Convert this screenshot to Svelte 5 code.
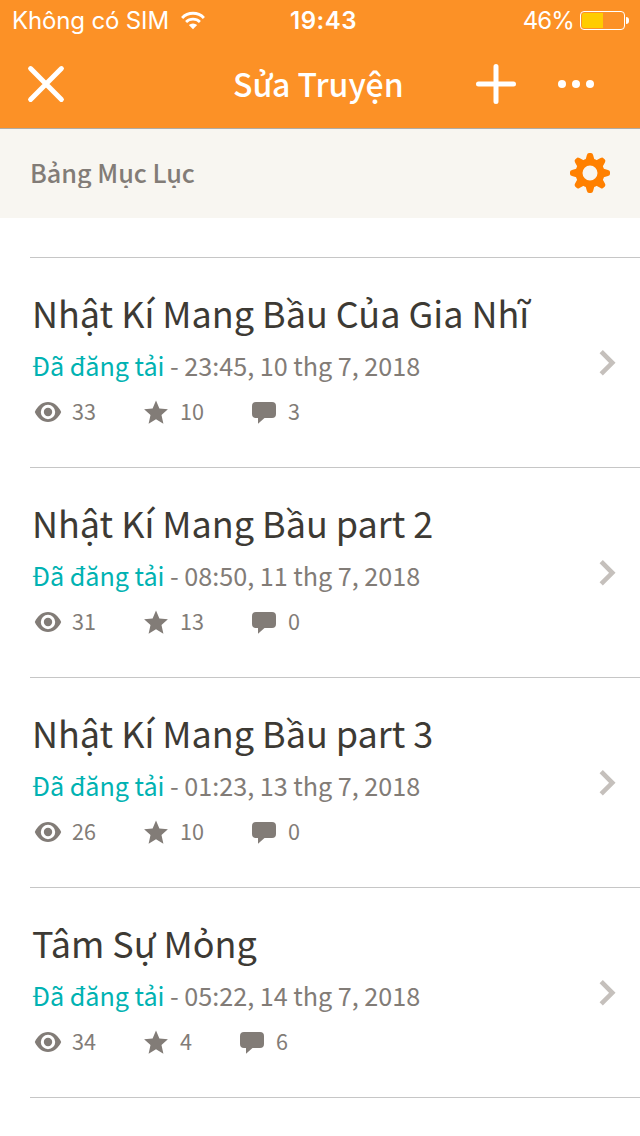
<script lang="ts">
  type Part = {
    id: number;
    title: string;
    date: string;
    reads: number;
    votes: number;
    comments: number;
  };

  export let status = 'Đã đăng tải';
  export let battery = 46;
  export let parts: Part[] = [
    { id: 1, title: 'Nhật Kí Mang Bầu Của Gia Nhĩ', date: '23:45, 10 thg 7, 2018', reads: 33, votes: 10, comments: 3 },
    { id: 2, title: 'Nhật Kí Mang Bầu part 2', date: '08:50, 11 thg 7, 2018', reads: 31, votes: 13, comments: 0 },
    { id: 3, title: 'Nhật Kí Mang Bầu part 3', date: '01:23, 13 thg 7, 2018', reads: 26, votes: 10, comments: 0 },
    { id: 4, title: 'Tâm Sự Mỏng', date: '05:22, 14 thg 7, 2018', reads: 34, votes: 4, comments: 6 }
  ];

  const teeth = [0, 45, 90, 135, 180, 225, 270, 315];
</script>

<div class="screen">
  <header>
    <div class="status-bar">
      <div class="carrier">
        <span class="carrier-name">Không có SIM</span>
        <svg class="wifi" width="24" height="19" viewBox="0 0 26 20">
          <path d="M1.2 7.2a16.500 16.500 0 0 1 23.600 0" fill="none" stroke="#fff" stroke-width="3.2" />
          <path d="M5.500 11.700a10.600 10.600 0 0 1 15 0" fill="none" stroke="#fff" stroke-width="3" />
          <path d="M13 19.600l-4.500-4.600a6.400 6.400 0 0 1 9 0z" fill="#fff" />
        </svg>
      </div>
      <span class="clock">19:43</span>
      <div class="power">
        <span class="percent">{battery}%</span>
        <div class="battery"><div class="level" style="width: {battery + 4}%"></div></div>
        <div class="battery-tip"></div>
      </div>
    </div>
    <div class="nav-bar">
      <button class="close" aria-label="Đóng">
        <svg width="36" height="36" viewBox="0 0 36 36">
          <path d="M2.6 2.6l30.8 30.8M33.4 2.6L2.6 33.4" stroke="#fff" stroke-width="5" stroke-linecap="round" />
        </svg>
      </button>
      <h1>Sửa Truyện</h1>
      <div class="nav-actions">
        <button aria-label="Thêm">
          <svg width="40" height="40" viewBox="0 0 40 40">
            <path d="M20 2.5v35M2.5 20h35" stroke="#fff" stroke-width="5" stroke-linecap="round" />
          </svg>
        </button>
        <button aria-label="Khác">
          <svg width="36" height="8" viewBox="0 0 36 8" fill="#fff">
            <circle cx="4" cy="4" r="4" />
            <circle cx="18" cy="4" r="4" />
            <circle cx="32" cy="4" r="4" />
          </svg>
        </button>
      </div>
    </div>
  </header>

  <div class="section">
    <h2>Bảng Mục Lục</h2>
    <button aria-label="Cài đặt">
      <svg width="40" height="40" viewBox="0 0 40 40" fill="#ff8000">
        <circle cx="20" cy="20" r="11" fill="none" stroke="#ff8000" stroke-width="7" />
        {#each teeth as angle}
          <path d="M15.2 8l1.7-6q.5-2 2.1-2h2q1.6 0 2.1 2l1.7 6z" transform="rotate({angle} 20 20)" />
        {/each}
      </svg>
    </button>
  </div>

  <div class="part-list">
    {#each parts as part (part.id)}
      <div class="part">
        <div class="part-body">
          <div class="part-title">{part.title}</div>
          <div class="part-meta"><span class="published">{status}</span> - {part.date}</div>
          <div class="stats">
            <div class="stat">
              <svg width="24" height="24" viewBox="0 0 24 24">
                <path fill-rule="evenodd" d="M-1.2 12C1.5 6 6.2 2 12 2s10.500 4 13.200 10C22.500 18 17.800 22 12 22S1.500 18-1.200 12zM12 4.800a7.200 7.200 0 1 0 0 14.400 7.200 7.200 0 0 0 0-14.400z" />
                <circle cx="12" cy="12" r="4.2" />
              </svg>
              <span>{part.reads}</span>
            </div>
            <div class="stat">
              <svg width="24" height="24" viewBox="0 0 24 24">
                <path d="M12 .5l3.4 7.9 8.500.8-6.400 5.700 1.900 8.900L12 19.300l-7.400 4.500 1.900-8.900L.1 9.200l8.500-.8z" />
              </svg>
              <span>{part.votes}</span>
            </div>
            <div class="stat">
              <svg width="24" height="24" viewBox="0 0 24 24">
                <path d="M4 2h16a4 4 0 0 1 4 4v8a4 4 0 0 1-4 4h-7.500L6 23.800V18H4a4 4 0 0 1-4-4V6a4 4 0 0 1 4-4z" />
              </svg>
              <span>{part.comments}</span>
            </div>
          </div>
        </div>
        <svg class="chevron" width="18" height="26" viewBox="0 0 18 26">
          <path d="M2.2 1.7L13.300 12.800 2.200 23.900" fill="none" stroke="#c5c0bc" stroke-width="4.6" />
        </svg>
      </div>
    {/each}
  </div>
</div>

<style>
:global(body) {
  margin: 0;
  background: #fff;
}
.screen {
  width: 640px;
  height: 1136px;
  overflow: hidden;
  background: #fff;
  font-family: "Noto Sans CJK SC", "Noto Sans", sans-serif;
}
button {
  display: flex;
  padding: 0;
  border: none;
  background: none;
  cursor: pointer;
}
svg {
  display: block;
  overflow: visible;
}
header {
  height: 128px;
  background: #fc9126;
  border-bottom: 1px solid #b0aca4;
  color: #fff;
}
.status-bar {
  display: grid;
  grid-template-columns: 278px auto 1fr;
  align-items: center;
  height: 40px;
  padding: 0 11px 0 12px;
  font-family: Inter, sans-serif;
  font-size: 24px;
  line-height: 40px;
}
.status-bar span {
  padding-top: 2px;
  line-height: 38px;
}
.carrier {
  display: flex;
  align-items: center;
  gap: 12px;
}
.carrier-name {
  letter-spacing: -0.15px;
}
.clock {
  font-weight: 600;
  letter-spacing: 0.5px;
}
.power {
  display: flex;
  align-items: center;
  justify-content: flex-end;
}
.percent {
  margin-right: 6px;
  letter-spacing: -0.9px;
}
.battery {
  box-sizing: border-box;
  width: 45px;
  height: 19px;
  padding: 1px;
  border: 1px solid #fff;
  border-radius: 4px;
}
.level {
  height: 100%;
  border-radius: 2px 0 0 2px;
  background: #ffcc00;
}
.battery-tip {
  width: 3px;
  height: 7px;
  margin-left: 1px;
  border-radius: 0 3px 3px 0;
  background: #fff;
}
.nav-bar {
  display: grid;
  grid-template-columns: 205px auto 1fr;
  align-items: center;
  height: 88px;
  padding: 0 46px 0 28px;
}
h1 {
  margin: 0;
  padding-bottom: 3px;
  font-size: 32px;
  font-weight: 500;
  line-height: 48px;
}
.nav-actions {
  display: flex;
  align-items: center;
  justify-content: flex-end;
  gap: 42px;
}
.section {
  display: flex;
  align-items: center;
  justify-content: space-between;
  box-sizing: border-box;
  height: 89px;
  padding: 0 30px 2px;
  background: #f8f6f1;
}
/* the line box is shorter than the glyphs and cuts off the descenders */
h2 {
  margin: 0;
  height: 30px;
  overflow: hidden;
  color: #827c77;
  font-size: 25.2px;
  font-weight: 500;
  line-height: 29px;
}
.part-list {
  margin: 39px 0 0 30px;
  border-bottom: 1px solid #c6c6c6;
}
.part {
  display: flex;
  align-items: center;
  justify-content: space-between;
  box-sizing: border-box;
  height: 210px;
  padding-right: 23px;
  border-top: 1px solid #c6c6c6;
}
.part-body {
  align-self: flex-start;
  padding: 29px 0 0 2px;
}
.part-title {
  color: #3d3a34;
  font-size: 36px;
  letter-spacing: -0.02px;
  line-height: 50px;
  white-space: nowrap;
}
.part-meta {
  margin-top: 10px;
  color: #827c77;
  font-size: 25.2px;
  letter-spacing: -0.03px;
  line-height: 36px;
  white-space: nowrap;
}
.published {
  color: #00b2b2;
}
.stats {
  display: flex;
  gap: 48px;
  margin: 13px 0 0 4px;
  color: #827c77;
  font-size: 21.6px;
  line-height: 30px;
}
.stat {
  display: flex;
  gap: 12px;
}
.stat svg {
  margin-top: 4px;
  fill: #827c77;
}
</style>
